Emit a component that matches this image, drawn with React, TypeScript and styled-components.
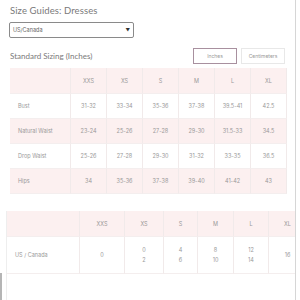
import { Fragment } from 'react';
import styled, { createGlobalStyle } from 'styled-components';

const GlobalStyle = createGlobalStyle`
  html, body {
    margin: 0;
    padding: 0;
    background: #fff;
  }
  body {
    font-family: 'Inter', 'Liberation Sans', sans-serif;
    color: #999;
  }
`;

const Frame = styled.div`
  width: 295px;
  height: 300px;
  overflow: hidden;
  border-right: 1px solid #d6d6d6;
  background: #fff;
`;

const Header = styled.div`
  padding: 0 8px 0 10px;
`;

const Title = styled.h1`
  margin: 0;
  padding-top: 5px;
  height: 17px;
  font-family: 'Lato', 'Liberation Sans', sans-serif;
  font-weight: 400;
  font-size: 9.5px;
  line-height: 12px;
  color: #7a7a7a;
  letter-spacing: 0.1px;
`;

const Select = styled.div`
  margin-left: -1px;
  width: 117px;
  height: 14px;
  border: 1px solid #8a8a8a;
  border-radius: 2px;
  display: flex;
  align-items: center;
  justify-content: space-between;
  padding: 0 3px;
  font-size: 5.5px;
  color: #666;
`;

const Caret = styled.span`
  font-size: 4.5px;
  color: #333;
`;

const SectionRow = styled.div`
  margin-top: 10px;
  margin-right: 2px;
  height: 16px;
  display: flex;
  align-items: center;
  justify-content: space-between;
`;

const SectionTitle = styled.h2`
  margin: 0;
  font-family: 'Lato', 'Liberation Sans', sans-serif;
  font-weight: 400;
  font-size: 8px;
  color: #7a7a7a;
`;

const Toggles = styled.div`
  display: flex;
  gap: 4px;
`;

const Toggle = styled.div<{ $active?: boolean }>`
  width: 42px;
  height: 14px;
  border: 1px solid ${(p) => (p.$active ? '#a8909f' : '#e8e8e8')};
  display: flex;
  align-items: center;
  justify-content: center;
  font-size: 5px;
  color: #999;
`;

const Grid = styled.div<{ $cols: string }>`
  display: grid;
  grid-template-columns: ${(p) => p.$cols};
`;

const Table1 = styled(Grid)`
  margin: 4px 8px 0 10px;
`;

const Cell = styled.div<{ $pink?: boolean; $h: number; $left?: boolean }>`
  height: ${(p) => p.$h}px;
  display: flex;
  align-items: center;
  justify-content: ${(p) => (p.$left ? 'flex-start' : 'center')};
  padding-left: ${(p) => (p.$left ? '8px' : '0')};
  background: ${(p) => (p.$pink ? '#fcf0f0' : '#fff')};
  border-right: 1px solid #f1eaea;
  border-bottom: 1px solid #f4eeee;
  font-size: 5.5px;
  line-height: 10px;
  color: #999;
  text-align: center;
  box-sizing: border-box;
  white-space: nowrap;
`;

const Stack = styled.div`
  display: flex;
  flex-direction: column;
`;

const Lower = styled.div`
  margin-top: 17px;
  height: 92px;
  display: flex;
`;

const Gutter = styled.div`
  width: 6px;
  display: flex;
  flex-direction: column;
  justify-content: flex-end;
`;

const ScrollMark = styled.div`
  width: 2px;
  height: 30px;
  background: #b5b5b5;
`;

const Scroller = styled.div`
  flex: 1;
  border-left: 1px solid #eee;
  overflow: hidden;
`;

const Table2 = styled(Grid)`
  width: 300px;
`;

const sizes = ['XXS', 'XS', 'S', 'M', 'L', 'XL'];

const rows: [string, string[]][] = [
  ['Bust', ['31-32', '33-34', '35-36', '37-38', '39.5-41', '42.5']],
  ['Natural Waist', ['23-24', '25-26', '27-28', '29-30', '31.5-33', '34.5']],
  ['Drop Waist', ['25-26', '27-28', '29-30', '31-32', '33-35', '36.5']],
  ['Hips', ['34', '35-36', '37-38', '39-40', '41-42', '43']],
];

const usRow = [['0'], ['0', '2'], ['4', '6'], ['8', '10'], ['12', '14'], ['16']];

export default function App() {
  return (
    <>
      <GlobalStyle />
      <Frame>
        <Header>
          <Title>Size Guides: Dresses</Title>
          <Select>
            <span>US/Canada</span>
            <Caret>▼</Caret>
          </Select>
          <SectionRow>
            <SectionTitle>Standard Sizing (Inches)</SectionTitle>
            <Toggles>
              <Toggle $active>Inches</Toggle>
              <Toggle>Centimeters</Toggle>
            </Toggles>
          </SectionRow>
        </Header>

        <Table1 $cols="61px repeat(6, 1fr)">
          <Cell $pink $h={26} />
          {sizes.map((s) => (
            <Cell key={s} $pink $h={26}>
              {s}
            </Cell>
          ))}
          {rows.map(([label, vals], i) => (
            <Fragment key={label}>
              <Cell $left $pink={i % 2 === 1} $h={25}>
                {label}
              </Cell>
              {vals.map((v, j) => (
                <Cell key={j} $pink={i % 2 === 1} $h={25}>
                  {v}
                </Cell>
              ))}
            </Fragment>
          ))}
        </Table1>

        <Lower>
          <Gutter>
            <ScrollMark />
          </Gutter>
          <Scroller>
            <Table2 $cols="73px 45px 39px 34px 36px 35px 38px">
              <Cell $pink $h={26} />
              {sizes.map((s) => (
                <Cell key={s} $pink $h={26}>
                  {s}
                </Cell>
              ))}
              <Cell $left $h={37}>
                US / Canada
              </Cell>
              {usRow.map((vals, j) => (
                <Cell key={j} $h={37}>
                  <Stack>
                    {vals.map((v, k) => (
                      <span key={k}>{v}</span>
                    ))}
                  </Stack>
                </Cell>
              ))}
            </Table2>
          </Scroller>
        </Lower>
      </Frame>
    </>
  );
}
